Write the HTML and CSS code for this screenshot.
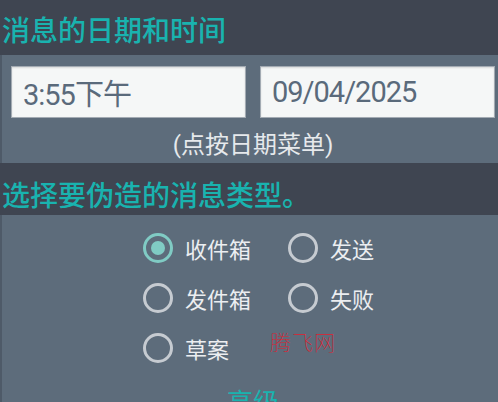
FILE: index.html
```html
<!DOCTYPE html>
<html lang="zh-CN">
<head>
<meta charset="utf-8">
<title>消息的日期和时间</title>
<link rel="stylesheet" href="styles.css">
</head>
<body>
<div class="screen">
  <h2 class="section-title section-title--first">消息的日期和时间</h2>
  <div class="panel panel-time">
    <div class="fields">
      <div class="field">3:55下午</div>
      <div class="field">09/04/2025</div>
    </div>
    <div class="hint">(点按日期菜单)</div>
  </div>
  <h2 class="section-title section-title--second">选择要伪造的消息类型。</h2>
  <div class="panel panel-type">
    <div class="radio-group">
      <label class="radio-item"><span class="radio radio--checked"></span><span class="radio-label">收件箱</span></label>
      <label class="radio-item"><span class="radio"></span><span class="radio-label">发送</span></label>
      <label class="radio-item"><span class="radio"></span><span class="radio-label">发件箱</span></label>
      <label class="radio-item"><span class="radio"></span><span class="radio-label">失败</span></label>
      <label class="radio-item"><span class="radio"></span><span class="radio-label">草案</span></label>
    </div>
    <div class="advanced">高级</div>
    <span class="watermark">腾飞网</span>
  </div>
</div>
</body>
</html>
```

FILE: styles.css
```css
html, body {
  margin: 0;
  padding: 0;
}
body {
  background: #3f4551;
  width: 498px;
  height: 402px;
  overflow: hidden;
  font-family: "Noto Sans CJK SC", "Noto Sans", sans-serif;
}
.screen {
  display: flex;
  flex-direction: column;
}
.section-title {
  margin: 0;
  padding-left: 2px;
  font-size: 28px;
  line-height: 28px;
  font-weight: 500;
  color: #19b3af;
  white-space: nowrap;
}
.section-title--first {
  padding-top: 15px;
  padding-bottom: 12px;
}
.section-title--second {
  padding-top: 17px;
  padding-bottom: 7px;
}
.panel {
  background: #5d6c7b;
  border-left: 2px solid #4e5a68;
}
.panel-time {
  padding: 11px 3px 6px 9px;
}
.fields {
  display: grid;
  grid-template-columns: 235px 235px;
  column-gap: 14px;
}
.field {
  box-sizing: border-box;
  height: 52px;
  background: #f5f7f7;
  border: 1px solid #a3abb3;
  box-shadow: inset 0 1px 2px rgba(0, 0, 0, 0.12);
  padding-left: 11px;
  display: flex;
  align-items: center;
  font-family: Roboto, "Noto Sans CJK SC", sans-serif;
  font-size: 29px;
  letter-spacing: -1px;
  color: #5a6a7b;
}
.hint {
  margin-top: 15px;
  text-align: center;
  font-family: Roboto, "Noto Sans CJK SC", sans-serif;
  font-size: 24px;
  line-height: 24px;
  color: #e6e9ec;
}
.panel-type {
  position: relative;
  flex: 1;
  height: 187px;
  padding: 8px 3px 0 9px;
}
.radio-group {
  display: grid;
  grid-template-columns: 145px auto;
  grid-auto-rows: 50px;
  padding-left: 132px;
}
.radio-item {
  display: flex;
  align-items: center;
}
.radio {
  position: relative;
  box-sizing: border-box;
  width: 30px;
  height: 30px;
  border: 3px solid #c6cbd1;
  border-radius: 50%;
  flex: none;
}
.radio--checked {
  border-color: #80cbc4;
}
.radio--checked::after {
  content: "";
  position: absolute;
  left: 5px;
  top: 5px;
  width: 14px;
  height: 14px;
  border-radius: 50%;
  background: #80cbc4;
}
.radio-label {
  margin-left: 12px;
  font-size: 22px;
  line-height: 22px;
  color: #eceef1;
}
.advanced {
  margin-top: 15px;
  text-align: center;
  font-size: 26px;
  line-height: 26px;
  color: #19b3af;
}
.watermark {
  position: absolute;
  left: 268px;
  top: 116px;
  font-family: "Noto Sans CJK SC", serif;
  font-size: 21px;
  line-height: 21px;
  color: #dc2230;
  font-weight: 100;
  letter-spacing: 1px;
}
```
